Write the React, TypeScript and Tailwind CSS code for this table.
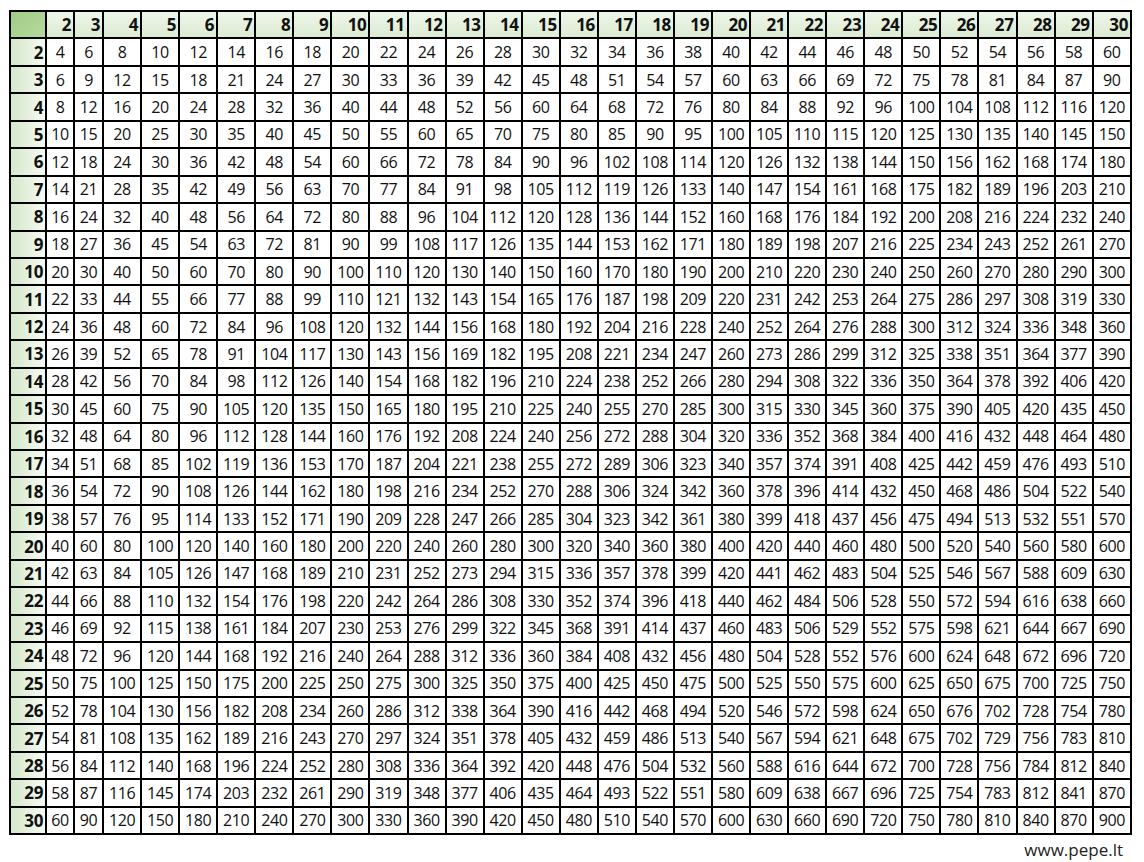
import React from "react";

const nums = Array.from({ length: 29 }, (_, i) => i + 2);

export default function App() {
  return (
    <div className="h-[862px] w-[1144px] bg-white pl-[9px] pt-[10px] font-['Open_Sans',sans-serif] text-[#111]">
      <table className="w-[1123px] table-fixed border-collapse border-2 border-black">
        <colgroup>
          <col className="w-[36px]" />
          <col className="w-[28px]" />
          <col className="w-[29px]" />
          {nums.slice(2).map((n) => (
            <col key={n} />
          ))}
        </colgroup>
        <thead>
          <tr className="h-[27.45px]">
            <th className="border-2 border-black bg-gradient-to-br from-[#a2cc86] to-[#b6d99e]" />
            {nums.map((n) => (
              <th
                key={n}
                className="border-2 border-black bg-gradient-to-b from-[#eef6ea] to-[#dcebd2] pr-[2px] text-right text-[17px] leading-none font-bold tracking-[-0.4px]"
              >
                {n}
              </th>
            ))}
          </tr>
        </thead>
        <tbody>
          {nums.map((r) => (
            <tr key={r} className="h-[27.45px]">
              <th className="border-2 border-black bg-gradient-to-r from-[#d5e8ca] to-[#f5faf2] pr-[2px] text-right text-[17px] leading-none font-bold tracking-[-0.4px]">
                {r}
              </th>
              {nums.map((c) => (
                <td
                  key={c}
                  className="border-2 border-black p-0 text-center text-[16px] leading-none tracking-[-0.4px]"
                >
                  {r * c}
                </td>
              ))}
            </tr>
          ))}
        </tbody>
      </table>
      <div className="w-[1123px] pt-[2px] pr-[9px] text-right text-[17px] text-[#222]">www.pepe.lt</div>
    </div>
  );
}
